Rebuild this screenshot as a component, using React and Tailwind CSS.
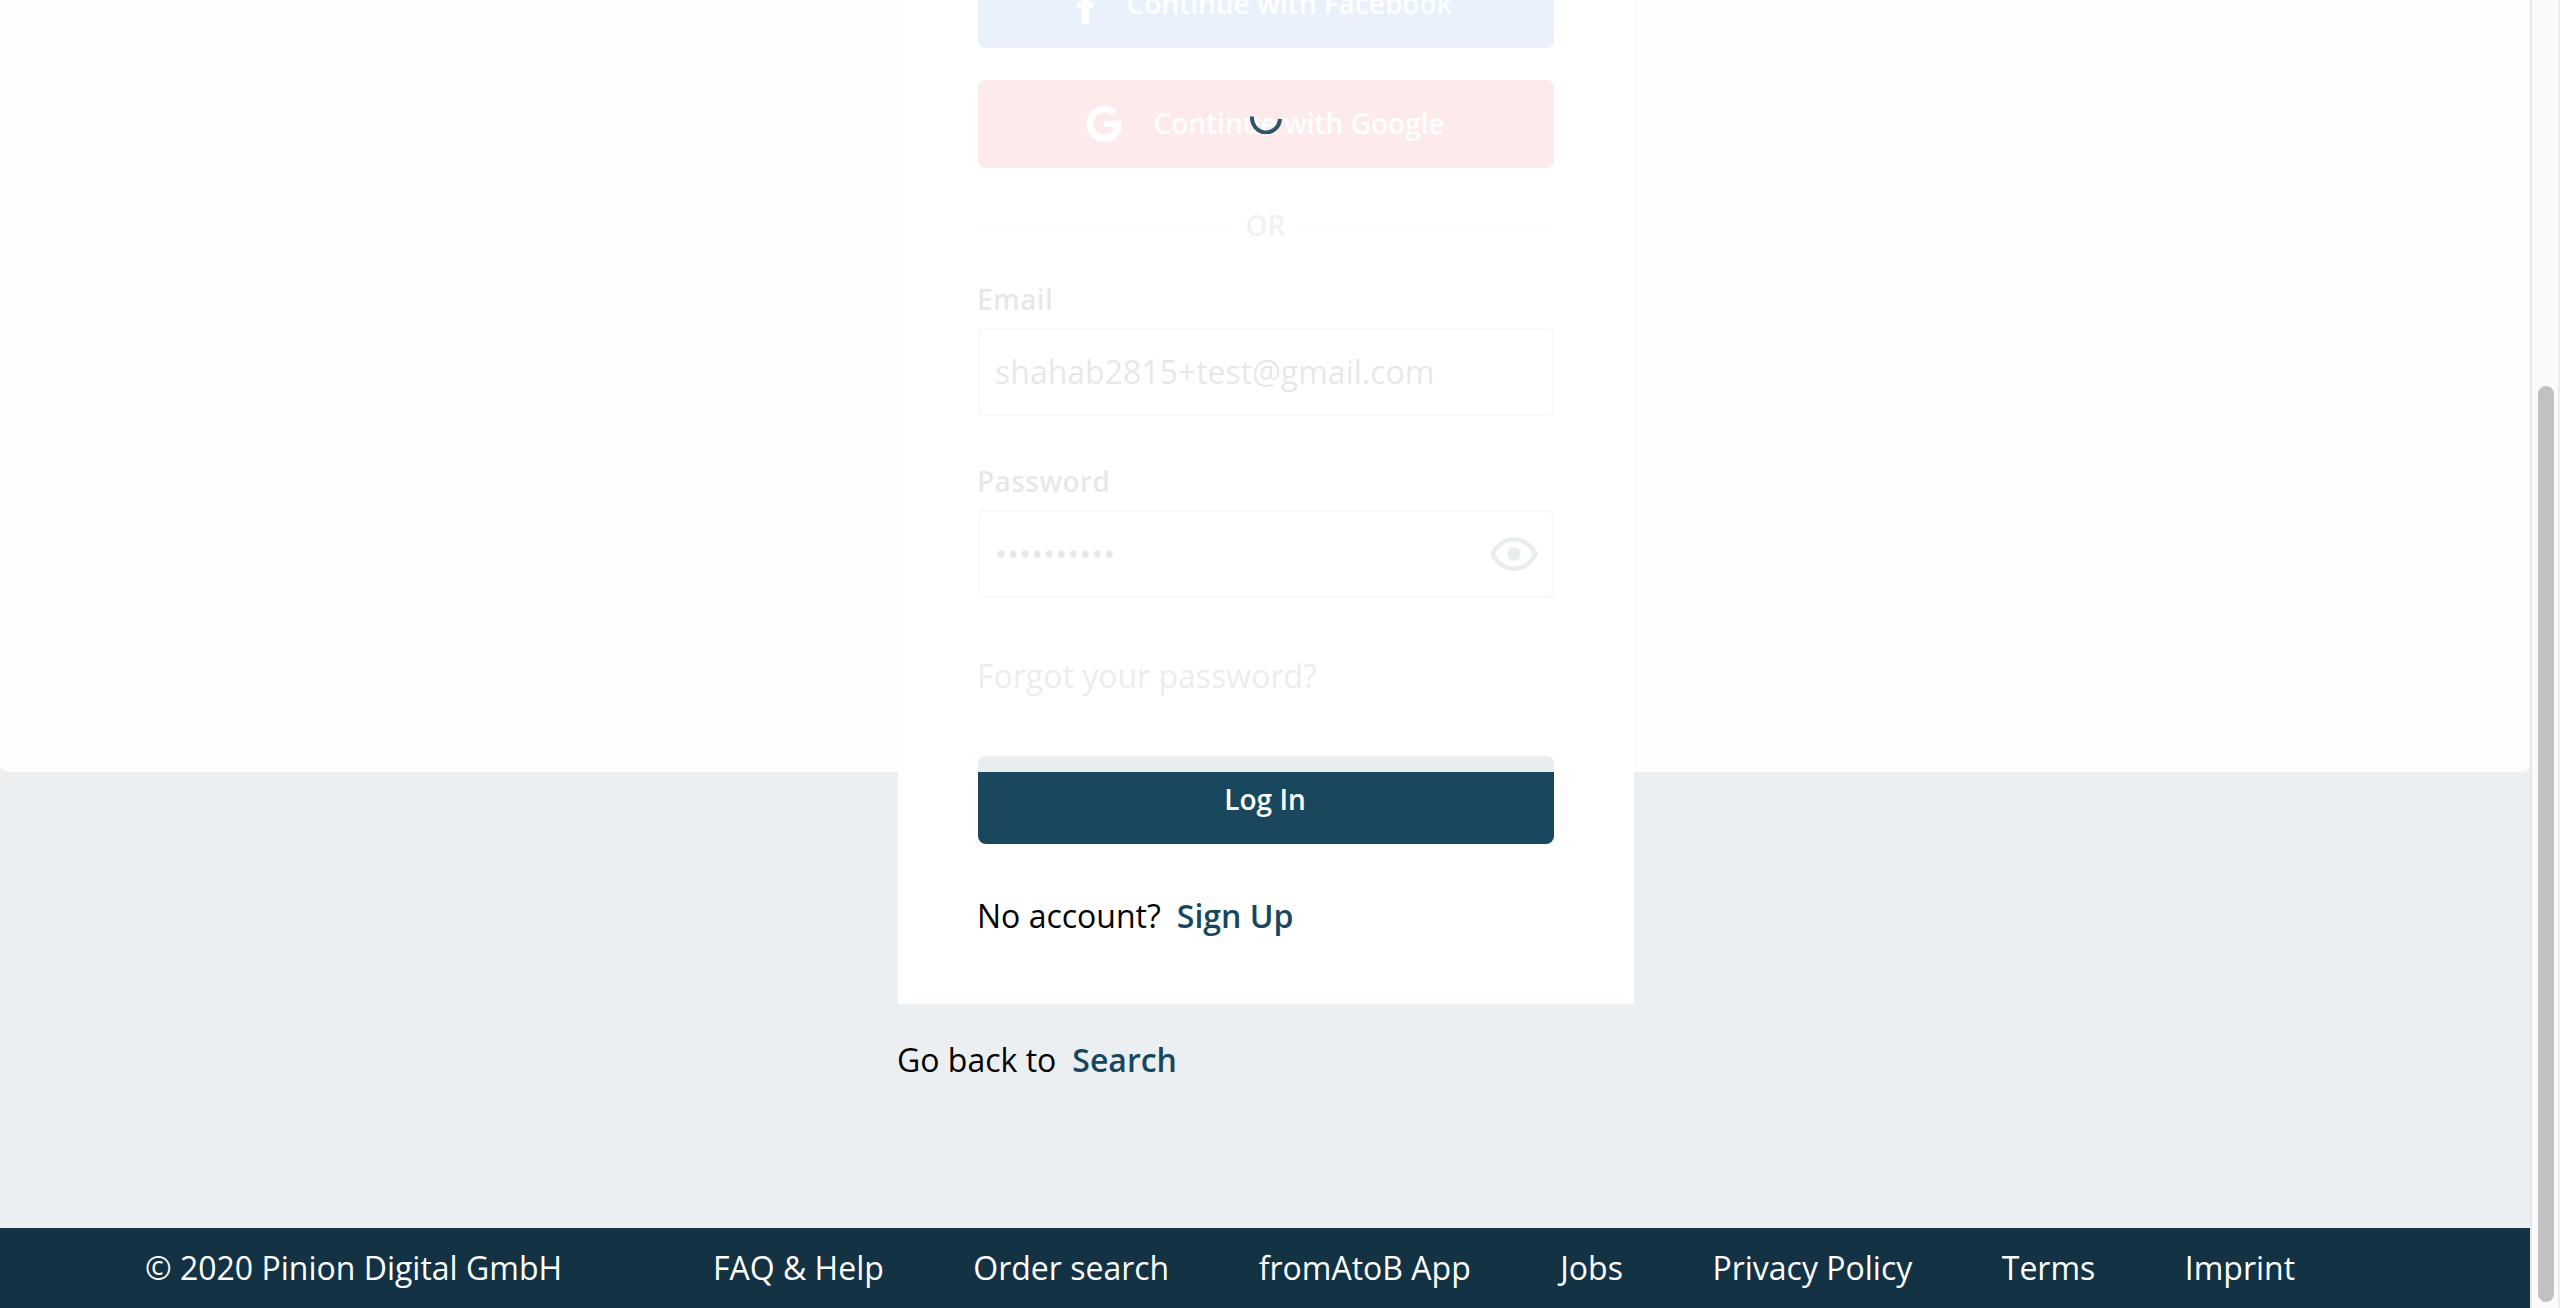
const links = ["FAQ & Help", "Order search", "fromAtoB App", "Jobs", "Privacy Policy", "Terms", "Imprint"];

function SocialButton({ className, icon, label }) {
  return (
    <button className={`flex h-[88px] shrink-0 items-center justify-center rounded-lg text-[28px] leading-10 font-semibold text-white ${className}`}>
      {icon}
      <span className="pb-0.5">{label}</span>
    </button>
  );
}

const FacebookIcon = () => (
  <svg viewBox="0 0 18 36" className="h-9 w-[18px] overflow-visible" fill="currentColor">
    <path d="M4.500 36V20H0v-6h4.500V9.400C4.500 3.500 8 0 13.500 0c2 0 3.500.2 4 .3v5.700h-3C12.500 6 12 7.300 12 9.300V14H17l-1 6h-4v16z" transform="translate(0 2)" />
  </svg>
);

const GoogleIcon = () => (
  <svg viewBox="0 0 36 36" className="h-9 w-9" fill="currentColor">
    <path d="M18.400 14.700v6.200h10.100c-.5 2.600-3.100 7.700-10.100 7.700-6.100 0-11-5-11-11.200s4.900-10.800 11-10.800c3.500 0 5.800 1.300 7.100 2.600l4.900-4.700C27.200 1.600 23.200 0 18.400 0 8.300 0 .4 8 .4 18s7.900 18 18 18c10.400 0 17.300-7.300 17.300-17.600 0-1.200-.1-2.400-.3-3.700z" />
  </svg>
);

const EyeIcon = () => (
  <svg viewBox="0 0 48 34" className="h-[34px] w-12">
    <path d="M2.500 17C7 8 15 2.300 24 2.300S41 8 45.500 17C41 26 33 31.700 24 31.700S7 26 2.500 17z" fill="none" stroke="#17475e" strokeWidth="4.600" />
    <circle cx="24" cy="17" r="6.700" fill="#17475e" />
  </svg>
);

export default function App() {
  return (
    <div className="flex h-[1308px] w-[2560px] overflow-hidden bg-[#ebeff2] font-['Open_Sans',sans-serif] text-[32px] leading-[48px] text-black">
      <div className="relative flex w-[2530px] flex-col">
        <main className="flex h-[1228px] flex-col items-center">
          <div className="-mt-10 flex w-[736px] translate-x-px flex-col bg-white px-20 pb-16">
            <SocialButton className="gap-[31px] bg-[#2373eb] pr-0.5" icon={<FacebookIcon />} label="Continue with Facebook" />
            <SocialButton className="mt-8 gap-[31px] bg-[#ef3a38] pr-px" icon={<GoogleIcon />} label="Continue with Google" />
            <div className="mt-[37px] flex h-10 items-center text-[28px] leading-10 text-[#777]">
              <span className="h-0.5 flex-1 bg-[#e3e3e3]" />
              <span className="pr-[13px] pl-3 font-semibold">OR</span>
              <span className="h-0.5 flex-1 bg-[#e3e3e3]" />
            </div>
            <label className="mt-[34px] -ml-px text-[28px] leading-10 font-semibold tracking-[0.4px] text-[#111]">Email</label>
            <div className="mt-[9px] flex h-[88px] items-center rounded-md border-2 border-[#c0c0c0] px-[15px] text-[#111]">
              shahab2815+test@gmail.com
            </div>
            <label className="mt-[45px] -ml-px text-[28px] leading-10 font-semibold tracking-[0.4px] text-[#111]">Password</label>
            <div className="mt-[9px] flex h-[88px] items-center justify-between rounded-md border-2 border-[#c0c0c0] pr-3.5 pl-[15px] text-[#111]">
              <span>••••••••••</span>
              <EyeIcon />
            </div>
            <a className="mt-[54px] -ml-px text-[#17475e]">Forgot your password?</a>
            <button className="mt-14 h-[88px] rounded-lg bg-[#19475e] pr-0.5 pb-0.5 text-[28px] leading-10 font-semibold text-white">Log In</button>
            <p className="mt-12 -ml-px flex gap-4">
              <span>No account?</span>
              <a className="font-semibold text-[#17475e]">Sign Up</a>
            </p>
          </div>
          <p className="mt-8 flex w-[736px] gap-4">
            <span>Go back to</span>
            <a className="font-semibold text-[#17475e]">Search</a>
          </p>
        </main>
        <footer className="flex h-20 items-center bg-[#133243] pl-[145px] text-white">
          <span className="w-[568px]">© 2020 Pinion Digital GmbH</span>
          <nav className="flex gap-[89.5px]">
            {links.map((l) => (
              <a key={l} className="whitespace-nowrap">{l}</a>
            ))}
          </nav>
        </footer>
        <div className="absolute inset-x-0 top-0 h-[772px] rounded-b-lg bg-white/90">
          <svg viewBox="0 0 32 32" className="absolute top-[102px] left-[1250px] h-8 w-8">
            <path d="M2 14.500A13.900 14.600 0 0 0 30 17" fill="none" stroke="#2c5568" strokeWidth="4" />
          </svg>
        </div>
      </div>
      <div className="flex w-[30px] flex-col border-r-2 border-l-2 border-r-[#ececec] border-l-[#e7e7e7] bg-[#fafafa] pt-[386px] pl-1.5">
        <div className="h-[916px] w-4 rounded-full bg-[#c1c1c1]" />
      </div>
    </div>
  );
}
